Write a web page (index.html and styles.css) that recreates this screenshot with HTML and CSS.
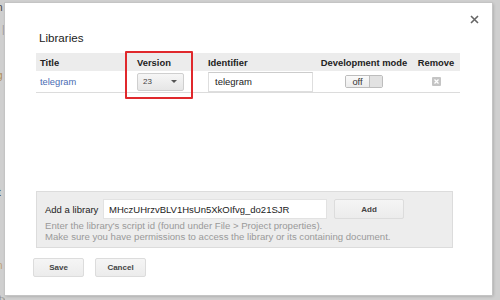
FILE: index.html
```html
<!DOCTYPE html>
<html>
<head>
<meta charset="utf-8">
<link rel="stylesheet" href="styles.css">
</head>
<body>
<div class="backdrop">
  <div class="edge">
    <span class="e1">n</span>
    <span class="e2">|</span>
    <span class="e3">g</span>
    <span class="e4">t</span>
    <span class="e5">t</span>
    <span class="e6">n</span>
    <span class="e7">t</span>
    <span class="e8">tx</span>
  </div>
  <div class="dialog">
    <button class="close" aria-label="Close">
      <svg width="9" height="9" viewBox="0 0 9 9"><path d="M1 1L8 8M8 1L1 8" stroke="#666" stroke-width="1.6" fill="none"/></svg>
    </button>
    <h1 class="title">Libraries</h1>
    <div class="table">
      <div class="th">Title</div>
      <div class="th">Version</div>
      <div class="th">Identifier</div>
      <div class="th center">Development mode</div>
      <div class="th center">Remove</div>
      <div class="td"><a class="link">telegram</a></div>
      <div class="td"><div class="select"><span>23</span><span class="arrow"></span></div></div>
      <div class="td"><div class="ident">telegram</div></div>
      <div class="td center"><div class="toggle"><span class="off">off</span><span class="knob"></span></div></div>
      <div class="td center">
        <svg class="remove" width="9" height="9" viewBox="0 0 9 9"><rect width="9" height="9" rx="1" fill="#c4c4c4"/><path d="M2.5 2.5L6.5 6.5M6.5 2.5L2.5 6.5" stroke="#fff" stroke-width="1.3"/></svg>
      </div>
    </div>
    <div class="highlight"></div>
    <div class="addpanel">
      <div class="addrow">
        <span class="addlabel">Add a library</span>
        <div class="addinput">MHczUHrzvBLV1HsUn5XkOIfvg_do21SJR</div>
        <button class="btn addbtn">Add</button>
      </div>
      <p class="hint">Enter the library's script id (found under File &gt; Project properties).<br>Make sure you have permissions to access the library or its containing document.</p>
    </div>
    <div class="actions">
      <button class="btn">Save</button>
      <button class="btn">Cancel</button>
    </div>
  </div>
</div>
</body>
</html>
```
FILE: styles.css
```css
* { box-sizing: border-box; }
html, body { margin: 0; padding: 0; }
body {
  width: 500px;
  height: 300px;
  overflow: hidden;
  background: #cfcfcf;
  font-family: "Liberation Sans", Arial, sans-serif;
}
.backdrop {
  display: flex;
  padding-top: 3px;
  height: 300px;
}
.edge {
  width: 5px;
  position: relative;
  overflow: hidden;
  font-size: 10px;
  flex: none;
}
.edge span { position: absolute; left: -3px; line-height: 10px; }
.e1 { top: 0; color: #444; }
.e2 { top: 22px; color: #999; left: 2px !important; }
.e3 { top: 68px; color: #b08a50; }
.e4 { top: 168px; color: #c0a070; }
.e5 { top: 185px; color: #333; left: -2px !important; }
.e6 { top: 258px; color: #c0a070; }
.e7 { top: 270px; color: #b07070; }
.e8 { top: 292px; color: #999; left: -1px !important; }

.dialog {
  position: relative;
  width: 487px;
  height: 292px;
  background: #fff;
  box-shadow: 0 0 0 1px #c4c4c4, 1px 1px 3px rgba(0,0,0,0.25);
  padding: 28px 32px 0 31px;
  display: flex;
  flex-direction: column;
  flex: none;
}
.close {
  position: absolute;
  top: 12px;
  right: 13px;
  width: 9px;
  height: 9px;
  padding: 0;
  border: 0;
  background: none;
  display: flex;
}
.title {
  margin: 0 0 8px 3px;
  font-size: 11.6px;
  line-height: 14px;
  font-weight: normal;
  color: #222;
}
.table {
  display: grid;
  grid-template-columns: 97px 71px 112px 96px 48px;
  width: 424px;
}
.th {
  background: #ececec;
  height: 18px;
  font-size: 9.4px;
  font-weight: bold;
  color: #222;
  padding-left: 4px;
  display: flex;
  align-items: center;
}
.td {
  height: 22px;
  border-bottom: 1px solid #dcdcdc;
  padding-left: 4px;
  display: flex;
  align-items: center;
  font-size: 9.3px;
}
.center { justify-content: center; padding-left: 0; }
.link { color: #4a6cb3; }
.select {
  width: 47px;
  height: 18px;
  border: 1px solid #cfcfcf;
  border-radius: 2px;
  background: linear-gradient(#f6f6f6, #e6e6e6);
  display: flex;
  align-items: center;
  justify-content: space-between;
  padding: 0 6px 0 5px;
  font-size: 8px;
  color: #444;
}
.arrow {
  width: 0; height: 0;
  border-left: 3px solid transparent;
  border-right: 3px solid transparent;
  border-top: 3px solid #555;
}
.ident {
  width: 105px;
  height: 20px;
  border: 1px solid #dedede;
  border-top-color: #ccc;
  padding-left: 6px;
  display: flex;
  align-items: center;
  color: #222;
  font-size: 9.5px;
}
.toggle {
  display: flex;
  width: 38px;
  height: 13px;
  border: 1px solid #bdbdbd;
  border-radius: 2px;
  overflow: hidden;
}
.off {
  width: 24px;
  background: linear-gradient(#fafafa, #ececec);
  border-right: 1px solid #bdbdbd;
  font-size: 9.3px;
  color: #333;
  display: flex;
  align-items: center;
  justify-content: center;
}
.knob { flex: 1; background: #e2e2e2; }
.remove { display: block; }
.highlight {
  position: absolute;
  left: 120px;
  top: 48px;
  width: 68px;
  height: 48px;
  border: 2px solid #e0282c;
  border-radius: 1px;
}
.addpanel {
  margin-top: 98px;
  width: 417px;
  height: 57px;
  background: #ededed;
  border: 1px solid #dcdcdc;
  padding: 7px 0 0 8px;
}
.addrow {
  display: flex;
  align-items: center;
  height: 20px;
}
.addlabel {
  font-size: 9.5px;
  color: #222;
  width: 58px;
}
.addinput {
  width: 224px;
  height: 20px;
  background: #fff;
  border: 1px solid #e2e2e2;
  padding-left: 5px;
  display: flex;
  align-items: center;
  font-size: 9.5px;
  color: #222;
}
.btn {
  height: 19px;
  width: 51px;
  border: 1px solid #dcdcdc;
  border-radius: 2px;
  background: linear-gradient(#f5f5f5, #ececec);
  font-family: "Liberation Sans", Arial, sans-serif;
  font-size: 8px;
  font-weight: bold;
  color: #444;
  padding: 0;
}
.addbtn { width: 70px; height: 20px; margin-left: 7px; }
.hint {
  margin: 1px 0 0 0;
  font-size: 9.6px;
  line-height: 11px;
  color: #9a9a9a;
}
.actions {
  display: flex;
  gap: 11px;
  margin-top: 10px;
  margin-left: -3px;
}
```
